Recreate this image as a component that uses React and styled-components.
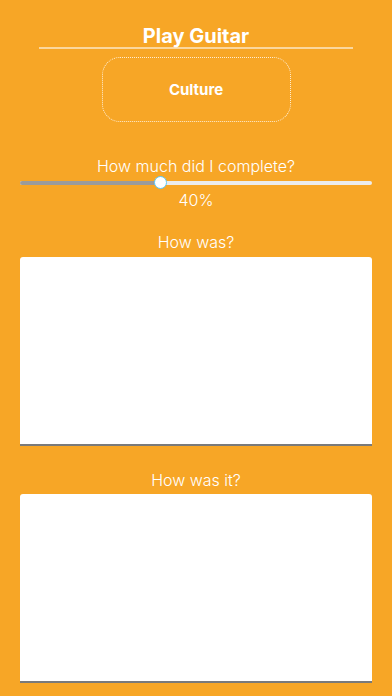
import React from 'react'
import styled, { createGlobalStyle } from 'styled-components'

const GlobalStyle = createGlobalStyle`
  html, body {
    margin: 0;
    padding: 0;
    background-color: #f7a626;
  }
  * {
    box-sizing: border-box;
  }
`

const Page = styled.div`
  width: 100%;
  min-height: 696px;
  display: flex;
  flex-direction: column;
  align-items: stretch;
  padding-top: 25px;
  background-color: #f7a626;
  color: #fff;
  font-family: Inter, 'Noto Sans', sans-serif;
`

const Title = styled.h1`
  margin: 0 39px;
  padding: 0;
  font-size: 20px;
  line-height: 22px;
  font-weight: 700;
  text-align: center;
  border-bottom: 2px solid rgba(255, 255, 255, 0.55);
`

const CategoryBox = styled.div`
  align-self: center;
  width: 189px;
  height: 65px;
  margin-top: 8px;
  display: flex;
  justify-content: center;
  align-items: center;
  border: 1px dotted rgba(255, 255, 255, 0.8);
  border-radius: 18px;
  font-size: 15px;
  font-weight: 700;
`

const Label = styled.div`
  margin-top: ${(props) => props.gap || 0}px;
  font-size: 16px;
  line-height: 20px;
  font-weight: 300;
  text-align: center;
`

const SliderWrap = styled.div`
  position: relative;
  height: 13px;
  margin: 0 20px;
  display: flex;
  align-items: center;
`

const Track = styled.div`
  width: 100%;
  height: 4px;
  border-radius: 2px;
  background-color: #ececec;
  overflow: hidden;
`

const TrackFill = styled.div`
  height: 100%;
  background-color: #9b9b9b;
`

const Thumb = styled.div`
  position: absolute;
  top: 0;
  width: 13px;
  height: 13px;
  margin-left: -6.5px;
  border-radius: 50%;
  background-color: #fff;
  border: 1.5px solid #5ac8fa;
`

const TextBox = styled.textarea`
  display: block;
  margin: ${(props) => props.gap || 0}px 20px 0;
  height: ${(props) => props.h}px;
  border: none;
  border-bottom: 2px solid #7a7a7a;
  border-radius: 3px 3px 0 0;
  background-color: #fff;
  resize: none;
  outline: none;
  padding: 8px;
  font-family: Inter, 'Noto Sans', sans-serif;
  font-size: 14px;
`

const App = () => {
  const progress = 40

  return (
    <>
      <GlobalStyle />
      <Page>
        <Title>Play Guitar</Title>
        <CategoryBox>Culture</CategoryBox>

        <Label gap={34}>How much did I complete?</Label>
        <SliderWrap>
          <Track>
            <TrackFill style={{ width: `${progress}%` }} />
          </Track>
          <Thumb style={{ left: `${progress}%` }} />
        </SliderWrap>
        <Label gap={1}>{progress}%</Label>

        <Label gap={22}>How was?</Label>
        <TextBox gap={5} h={189} />

        <Label gap={24}>How was it?</Label>
        <TextBox gap={4} h={189} />
      </Page>
    </>
  )
}

export default App
